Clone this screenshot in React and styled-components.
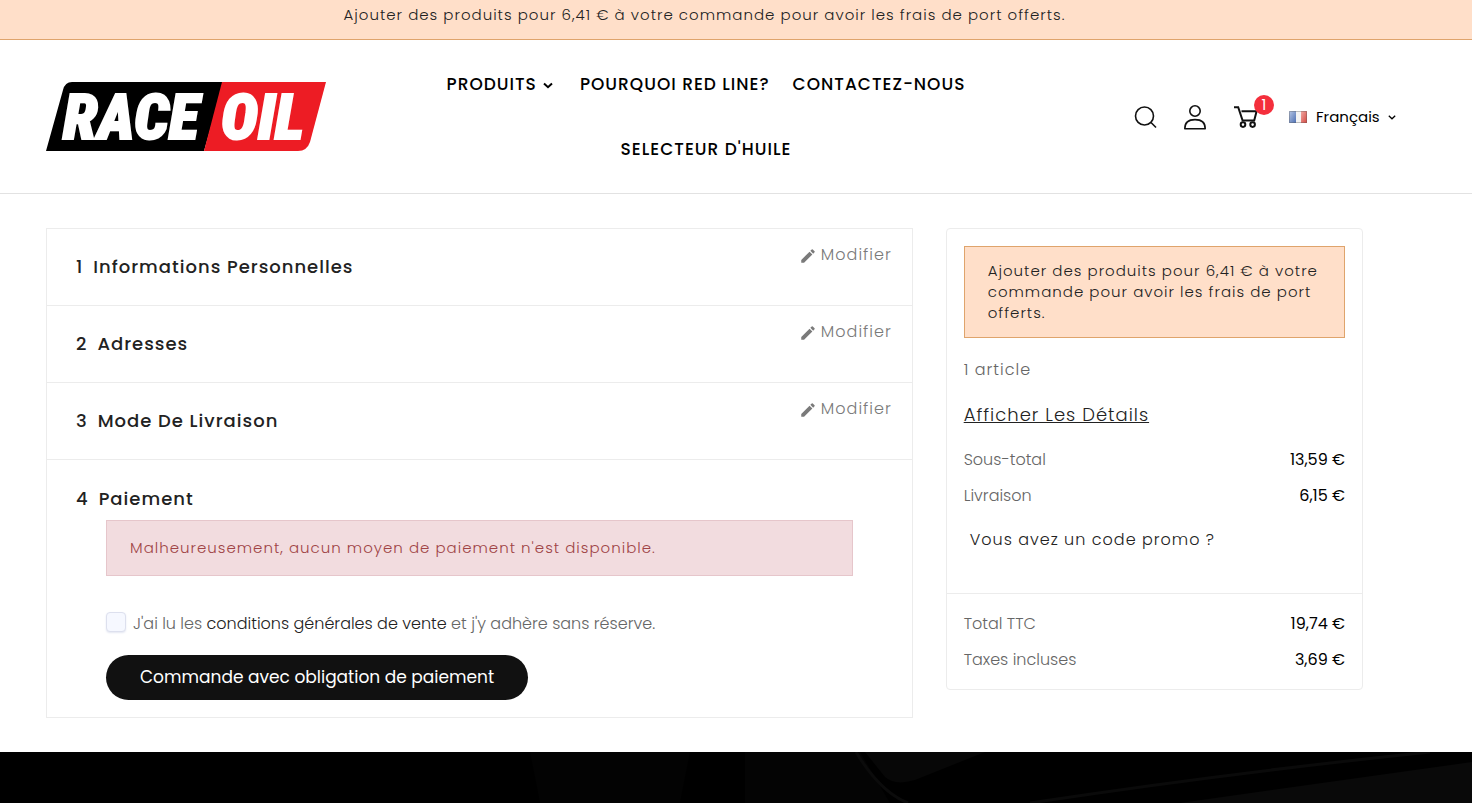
import React, { useState } from "react";
import styled, { createGlobalStyle, css } from "styled-components";
import { MdEdit } from "react-icons/md";

const GlobalStyle = createGlobalStyle`
  *, *::before, *::after {
    box-sizing: border-box;
  }
  body {
    margin: 0;
    background: #fff;
    color: #222;
    font-family: Poppins, Inter, "Liberation Sans", sans-serif;
    font-size: 16px;
    line-height: 24px;
  }
  a {
    color: inherit;
    text-decoration: none;
  }
  button {
    padding: 0;
    border: 0;
    background: none;
    color: inherit;
    font: inherit;
    cursor: pointer;
  }
  h1, h2, p, dl, dd {
    margin: 0;
    font-weight: inherit;
  }
  svg {
    display: block;
  }
`;

const orangeBox = css`
  background: #ffdfc9;
  color: #222;
  font-size: 15px;
  font-weight: 300;
  letter-spacing: 1px;
`;

const Banner = styled.p`
  ${orangeBox}
  padding: 5px 109px 14px 46px;
  border-bottom: 1px solid #dfa46c;
  line-height: 20px;
  text-align: center;
`;

const Header = styled.header`
  display: grid;
  grid-template-columns: 280px 1fr 262px;
  align-items: center;
  padding: 12px 76px 11px 46px;
  border-bottom: 1px solid #e2e2e2;
`;

const Nav = styled.nav`
  display: flex;
  flex-wrap: wrap;
  justify-content: center;
  column-gap: 23px;
  padding: 0 122px 0 74px;
`;

const NavLink = styled.a`
  display: flex;
  align-items: center;
  gap: 6px;
  color: #000;
  font-size: 17px;
  font-weight: 500;
  letter-spacing: 1px;
  line-height: 65px;
  text-transform: uppercase;

  svg {
    margin-right: 4px;
  }
`;

const Tools = styled.div`
  display: flex;
  align-items: center;
  gap: 26px;
  color: #111;
`;

const CartLink = styled.a`
  position: relative;
`;

const Badge = styled.span`
  position: absolute;
  top: -10px;
  right: -16px;
  width: 20px;
  height: 20px;
  border-radius: 50%;
  background: #f42f3c;
  color: #fff;
  font-size: 15px;
  line-height: 20px;
  text-align: center;
`;

const Language = styled.button`
  display: flex;
  align-items: center;
  gap: 8px;
  margin-left: 5px;
  color: #000;
  font-size: 15px;
`;

const Page = styled.main`
  display: grid;
  grid-template-columns: 27fr 13fr;
  align-items: start;
  gap: 33px;
  padding: 34px 109px 34px 46px;
`;

const Steps = styled.div`
  border: 1px solid #ececec;
`;

const Step = styled.section`
  & + & {
    border-top: 1px solid #ececec;
  }
`;

const StepHead = styled.div`
  display: flex;
  align-items: flex-start;
  justify-content: space-between;
  padding: ${(p) => (p.$open ? "15px 20px 9px 29px" : "14px 20px 26px 29px")};
`;

const StepTitle = styled.h1`
  display: flex;
  gap: 10px;
  margin-top: 12px;
  font-size: 18px;
  font-weight: 500;
  letter-spacing: 1px;
  text-transform: capitalize;
`;

const EditLink = styled.a`
  display: flex;
  align-items: center;
  gap: 4px;
  color: #7a7a7a;
  font-weight: 300;
  letter-spacing: 1px;

  svg {
    margin-top: 2px;
  }
`;

const StepBody = styled.div`
  padding: 0 59px 17px;
`;

const Alert = styled.p`
  padding: 17px 23px;
  border: 1px solid #e6c6cb;
  background: #f2dcdf;
  color: #a04446;
  font-size: 15px;
  font-weight: 300;
  letter-spacing: 1px;
  line-height: 20px;
`;

const Terms = styled.div`
  display: flex;
  gap: 7px;
  margin: 36px 0 19px;
  color: #666;
  font-weight: 300;

  a {
    color: #222;
  }
`;

const Checkbox = styled.input`
  flex: none;
  width: 20px;
  height: 20px;
  margin: 0;
  border: 1px solid #dde0ee;
  border-radius: 4px;
  background: #f6f8ff;
  box-shadow: 0 1px 2px #e4e7f2;
  appearance: none;

  &:checked {
    background: #111;
  }
`;

const OrderButton = styled.button`
  padding: 0 34px;
  border-radius: 23px;
  background: #111;
  color: #fff;
  font-size: 17px;
  line-height: 45px;
`;

const Summary = styled.aside`
  border: 1px solid #ececec;
  border-radius: 4px;
`;

const SummaryPart = styled.div`
  padding: 17px;

  & + & {
    padding-top: 18px;
    border-top: 1px solid #ececec;
  }
`;

const Notice = styled.p`
  ${orangeBox}
  padding: 13px 23px 14px;
  border: 1px solid #dfa46c;
  line-height: 21px;
`;

const Count = styled.p`
  margin: 20px 0 21px;
  color: #666;
  font-weight: 300;
  letter-spacing: 1px;
`;

const DetailsLink = styled.a`
  display: inline-block;
  margin-bottom: 21px;
  font-size: 18px;
  font-weight: 300;
  letter-spacing: 1px;
  text-decoration: underline;
  text-transform: capitalize;
`;

const Lines = styled.dl`
  display: grid;
  gap: 12px;
`;

const Line = styled.div`
  display: flex;
  justify-content: space-between;
  color: #666;
  font-weight: 300;

  dd {
    color: #000;
    font-weight: 400;
  }
`;

const PromoLink = styled.a`
  display: block;
  margin: 20px 6px 24px;
  font-weight: 300;
  letter-spacing: 1px;
`;

const Footer = styled.footer`
  height: 51px;
  overflow: hidden;
  background: #000;

  svg {
    width: 100%;
    height: 100%;
  }
`;

function Logo() {
  return (
    <svg width="280" height="70" viewBox="0 0 280 70" overflow="visible" role="img" aria-label="Race Oil">
      <path d="M26 0H178L158 69H0L17 8Q19 0 26 0Z" fill="#000" />
      <path d="M176 0H280L264 60Q261 69 252 69H158Z" fill="#ed1c24" />
      <g
        fill="#fff"
        stroke="#fff"
        strokeWidth="2"
        fontFamily="'Roboto Condensed', Oswald, 'Liberation Sans', sans-serif"
        fontSize="63"
        fontWeight="900"
        fontStyle="italic"
      >
        <text x="17" y="57">RACE</text>
        <text x="175" y="57">OIL</text>
      </g>
    </svg>
  );
}

function Chevron({ size = 10, weight = 2 }) {
  return (
    <svg width={size} height={size} viewBox="0 0 10 10" fill="none" stroke="currentColor" strokeWidth={weight}>
      <path d="M1 3.5L5 7.2L9 3.5" />
    </svg>
  );
}

function SearchIcon() {
  return (
    <svg width="24" height="24" viewBox="0 0 24 24" fill="none" stroke="currentColor" strokeWidth="1.6">
      <circle cx="10.5" cy="11" r="9" />
      <path d="M17 17.5L22 22.5" />
    </svg>
  );
}

function UserIcon() {
  return (
    <svg width="24" height="26" viewBox="0 0 24 26" fill="none" stroke="currentColor" strokeWidth="1.6">
      <circle cx="11" cy="7" r="5.2" />
      <path d="M0.8 24.7C0.8 18.5 5 15.6 11 15.6S21.2 18.5 21.2 24.7Z" strokeLinejoin="round" />
    </svg>
  );
}

function CartIcon() {
  return (
    <svg width="24" height="24" viewBox="0 0 24 24" fill="none" stroke="currentColor" strokeWidth="2">
      <path d="M0 2.2H4.2L8.6 15.5H20.2L22.6 6.2H7.5" />
      <circle cx="9" cy="19.6" r="2.3" />
      <circle cx="18.6" cy="19.6" r="2.3" />
    </svg>
  );
}

function Flag() {
  return (
    <svg width="19" height="12" viewBox="0 0 19 12">
      <defs>
        <linearGradient id="blue" x2="1" y2="1">
          <stop stopColor="#b9c8e6" />
          <stop offset="1" stopColor="#4d6fb2" />
        </linearGradient>
        <linearGradient id="red" x2="1" y2="1">
          <stop stopColor="#efaaa4" />
          <stop offset="1" stopColor="#d4463f" />
        </linearGradient>
      </defs>
      <path d="M0 0H7V12H0Z" fill="url(#blue)" />
      <path d="M7 0H12V12H7Z" fill="#f3f3f3" />
      <path d="M12 0H18V12H12Z" fill="url(#red)" />
      <path d="M0.5 0.5H17.5V11.5H0.5Z" fill="none" stroke="#555" strokeOpacity="0.35" />
    </svg>
  );
}

const shippingMessage =
  "Ajouter des produits pour 6,41 € à votre commande pour avoir les frais de port offerts.";

const doneSteps = ["Informations personnelles", "Adresses", "Mode de livraison"];

export default function App() {
  const [accepted, setAccepted] = useState(false);

  return (
    <>
      <GlobalStyle />
      <Banner>{shippingMessage}</Banner>

      <Header>
        <a href="#accueil">
          <Logo />
        </a>
        <Nav>
          <NavLink href="#produits">
            Produits <Chevron />
          </NavLink>
          <NavLink href="#red-line">Pourquoi Red Line?</NavLink>
          <NavLink href="#contact">Contactez-nous</NavLink>
          <NavLink href="#selecteur">Selecteur d'huile</NavLink>
        </Nav>
        <Tools>
          <button type="button" aria-label="Rechercher">
            <SearchIcon />
          </button>
          <a href="#compte" aria-label="Mon compte">
            <UserIcon />
          </a>
          <CartLink href="#panier" aria-label="Panier">
            <CartIcon />
            <Badge>1</Badge>
          </CartLink>
          <Language type="button">
            <Flag />
            Français
            <Chevron size={8} weight={1.6} />
          </Language>
        </Tools>
      </Header>

      <Page>
        <Steps>
          {doneSteps.map((title, i) => (
            <Step key={title}>
              <StepHead>
                <StepTitle>
                  <span>{i + 1}</span>
                  {title}
                </StepTitle>
                <EditLink href="#modifier">
                  <MdEdit size={18} />
                  Modifier
                </EditLink>
              </StepHead>
            </Step>
          ))}
          <Step>
            <StepHead $open>
              <StepTitle>
                <span>4</span>
                Paiement
              </StepTitle>
            </StepHead>
            <StepBody>
              <Alert>Malheureusement, aucun moyen de paiement n'est disponible.</Alert>
              <Terms>
                <Checkbox
                  id="terms"
                  type="checkbox"
                  checked={accepted}
                  onChange={(e) => setAccepted(e.target.checked)}
                />
                <label htmlFor="terms">
                  J'ai lu les <a href="#conditions">conditions générales de vente</a> et j'y
                  adhère sans réserve.
                </label>
              </Terms>
              <OrderButton type="submit">Commande avec obligation de paiement</OrderButton>
            </StepBody>
          </Step>
        </Steps>

        <Summary>
          <SummaryPart>
            <Notice>{shippingMessage}</Notice>
            <Count>1 article</Count>
            <DetailsLink href="#details">Afficher les détails</DetailsLink>
            <Lines>
              <Line>
                <dt>Sous-total</dt>
                <dd>13,59 €</dd>
              </Line>
              <Line>
                <dt>Livraison</dt>
                <dd>6,15 €</dd>
              </Line>
            </Lines>
            <PromoLink href="#promo">Vous avez un code promo ?</PromoLink>
          </SummaryPart>
          <SummaryPart>
            <Lines>
              <Line>
                <dt>Total TTC</dt>
                <dd>19,74 €</dd>
              </Line>
              <Line>
                <dt>Taxes incluses</dt>
                <dd>3,69 €</dd>
              </Line>
            </Lines>
          </SummaryPart>
        </Summary>
      </Page>

      <Footer>
        <svg viewBox="0 0 1472 51" preserveAspectRatio="none" aria-hidden="true">
          <path d="M530 0H690L680 51H540Z" fill="#030303" />
          <path d="M745 0H860L890 51H745Z" fill="#040404" />
          <path d="M865 0H985L915 28Q895 34 885 25Z" fill="#070707" />
          <path d="M856 0Q880 40 908 51" fill="none" stroke="#0b0b0b" strokeWidth="3" />
          <path d="M1030 51Q1220 22 1430 0" fill="none" stroke="#0a0a0a" strokeWidth="3" />
          <path d="M1180 51L1472 10V51Z" fill="#090909" />
        </svg>
      </Footer>
    </>
  );
}
